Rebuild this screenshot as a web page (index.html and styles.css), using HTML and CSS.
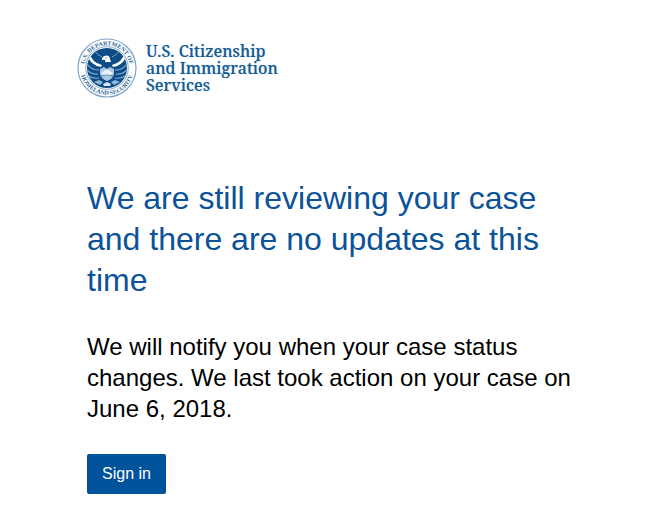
FILE: index.html
```html
<!DOCTYPE html>
<html lang="en">
<head>
    <meta charset="UTF-8">
    <meta name="viewport" content="width=device-width, initial-scale=1.0">
    <title>USCIS Case Status</title>
    <link rel="stylesheet" href="styles.css">
</head>
<body>
    <header class="site-header">
        <svg class="seal" viewBox="0 0 60 60" role="img" aria-label="U.S. Department of Homeland Security seal">
            <defs>
                <path id="ring-top" d="M9.3 39.6 A22.8 22.8 0 1 1 50.7 39.6" />
                <path id="ring-bottom" d="M3.1 30 A26.9 26.9 0 0 0 56.9 30" />
                <clipPath id="disc"><circle cx="30" cy="30" r="20" /></clipPath>
            </defs>
            <circle cx="30" cy="30" r="29" fill="#fff" stroke="#7ba6ca" stroke-width="1.2" />
            <circle cx="30" cy="30" r="21.3" fill="#fff" stroke="#5b8db8" stroke-width="0.7" />
            <circle cx="30" cy="30" r="20" fill="#0d4c86" />
            <g clip-path="url(#disc)">
                <!-- wings -->
                <path d="M13 15 Q14 24 25 27 L24 29 Q13 27 11 18 Z" fill="#fff" />
                <path d="M47 15 Q46 24 35 27 L36 29 Q47 27 49 18 Z" fill="#fff" />
                <path d="M18 13 Q20 17 25 19 M42 13 Q40 17 35 19" fill="none" stroke="#8fb7d5" stroke-width="0.8" />
                <path d="M10 26 Q14 32 22 32 M10 32 Q15 37 21 36 M12 38 Q16 41 22 40" fill="none" stroke="#82adce" stroke-width="1.2" />
                <path d="M50 26 Q46 32 38 32 M50 32 Q45 37 39 36 M48 38 Q44 41 38 40" fill="none" stroke="#82adce" stroke-width="1.2" />
                <!-- head -->
                <path d="M25 20.5 Q26 17.5 30 17.5 Q33 18 33 21 L34 24 H28 L28.5 21.8 L25 22 Z" fill="#fff" />
                <circle cx="29" cy="19.8" r="0.6" fill="#0d4c86" />
                <!-- shield -->
                <path d="M23 31 L27 29 L30 31 L33 29 L37 31 V36 Q36 41 30 43 Q24 41 23 36 Z" fill="#a9c8df" />
                <path d="M24 35 L30 31 L36 35 L32 38 H27 Z" fill="#e8f1f8" />
                <path d="M24 38 Q30 36 36 38" fill="none" stroke="#5b8db8" stroke-width="1" />
                <!-- branch and arrows -->
                <path d="M17 44 L22 42 L26 44 L23 47 Z" fill="#8fb7d5" />
                <path d="M43 44 L38 42 L34 44 L37 47 Z" fill="#8fb7d5" />
                <path d="M26 46 L30 44 L34 46 L33 48 H27 Z" fill="#d7e6f1" />
            </g>
            <text class="seal-text"><textPath href="#ring-top" startOffset="50%">U.S. DEPARTMENT OF</textPath></text>
            <text class="seal-text"><textPath href="#ring-bottom" startOffset="50%">HOMELAND SECURITY</textPath></text>
        </svg>
        <div class="site-name">U.S. Citizenship<br>and Immigration<br>Services</div>
    </header>

    <main class="content">
        <h1>We are still reviewing your case and there are no updates at this time</h1>
        <p>We will notify you when your case status changes. We last took action on your case on June 6, 2018.</p>
        <button type="button" class="sign-in">Sign in</button>
    </main>
</body>
</html>
```

FILE: styles.css
```css
body {
    margin: 0;
    padding: 38px 77px 28px;
    font-family: "Liberation Sans", Arial, sans-serif;
    background-color: #fff;
    color: #000;
}

.site-header {
    display: flex;
    align-items: center;
    gap: 9px;
}

.seal {
    width: 60px;
    height: 60px;
}

.seal-text {
    font-family: "Liberation Serif", Georgia, serif;
    font-size: 6px;
    font-weight: bold;
    text-anchor: middle;
    fill: #2d6699;
}

.site-name {
    font-family: "Noto Serif", "Liberation Serif", Georgia, serif;
    font-size: 16px;
    font-weight: 500;
    line-height: 17px;
    color: #155a93;
    text-shadow: 0 0 1px #8fb3d1;
}

.content {
    padding: 0 0 0 10px;
}

h1 {
    margin: 80px 0 30px;
    font-size: 32px;
    font-weight: normal;
    line-height: 41px;
    color: #0b5299;
}

p {
    margin: 0 0 30px;
    font-size: 24px;
    line-height: 31px;
}

.sign-in {
    height: 40px;
    padding: 0 15px;
    border: 0;
    border-radius: 2px;
    background-color: #00529b;
    color: #fff;
    font-family: inherit;
    font-size: 16px;
    cursor: pointer;
}

.sign-in:hover {
    background-color: #003f78;
}
```
